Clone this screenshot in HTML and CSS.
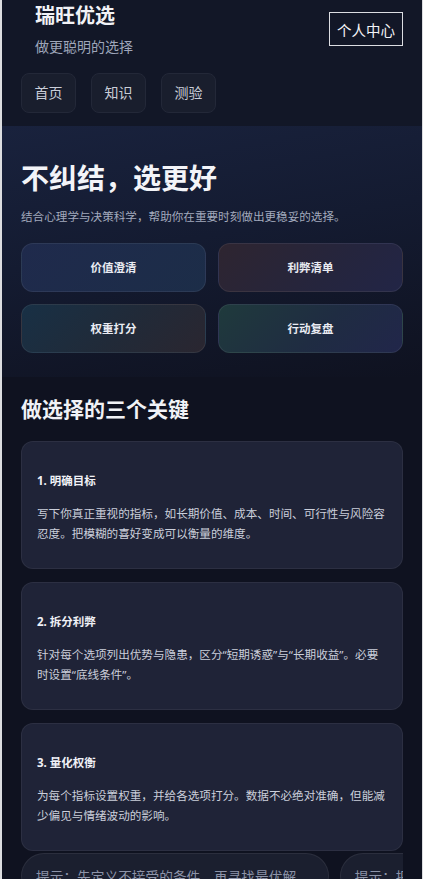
FILE: index.html
```html
<!DOCTYPE html>
<html lang="zh">

<head>
	<meta charset="utf-8">
	<title>瑞旺优选</title>
	<link rel="stylesheet" href="styles.css">
</head>

<body>
	<div class="app">
		<header class="header">
			<div class="header-top">
				<div class="brand">
					<div class="brand-name">瑞旺优选</div>
					<div class="brand-sub">做更聪明的选择</div>
				</div>
				<button class="btn-user">个人中心</button>
			</div>
			<nav class="nav">
				<a class="nav-item">首页</a>
				<a class="nav-item">知识</a>
				<a class="nav-item">测验</a>
			</nav>
		</header>

		<section class="hero">
			<h1 class="hero-title">不纠结，选更好</h1>
			<p class="hero-sub">结合心理学与决策科学，帮助你在重要时刻做出更稳妥的选择。</p>
			<div class="tools">
				<div class="tool tool-blue">价值澄清</div>
				<div class="tool tool-brown">利弊清单</div>
				<div class="tool tool-teal">权重打分</div>
				<div class="tool tool-green">行动复盘</div>
			</div>
		</section>

		<section class="keys">
			<h2 class="keys-title">做选择的三个关键</h2>
			<div class="card">
				<h3 class="card-title">1. 明确目标</h3>
				<p class="card-text">写下你真正重视的指标，如长期价值、成本、时间、可行性与风险容忍度。把模糊的喜好变成可以衡量的维度。</p>
			</div>
			<div class="card">
				<h3 class="card-title">2. 拆分利弊</h3>
				<p class="card-text">针对每个选项列出优势与隐患，区分“短期诱惑”与“长期收益”。必要时设置“底线条件”。</p>
			</div>
			<div class="card card-last">
				<h3 class="card-title">3. 量化权衡</h3>
				<p class="card-text">为每个指标设置权重，并给各选项打分。数据不必绝对准确，但能减少偏见与情绪波动的影响。</p>
			</div>
			<div class="tips">
				<div class="tip">提示：先定义不接受的条件，再寻找最优解。</div>
				<div class="tip">提示：把决定写下来，过一晚再确认。</div>
			</div>
		</section>
	</div>
</body>

</html>
```

FILE: styles.css
```css
* {
	box-sizing: border-box;
}

body {
	margin: 0;
	background-color: #dcdde0;
	font-family: "Noto Sans", "Noto Sans CJK SC", sans-serif;
	color: #eceef4;
}

.app {
	margin-left: 2px;
	width: 420px;
	min-height: 100vh;
	background-color: #0f1220;
	overflow: hidden;
}

/* header */
.header {
	background-color: #121727;
	padding: 0 19px 13px;
}

.header-top {
	display: flex;
	justify-content: space-between;
	align-items: flex-start;
}

.brand {
	padding-left: 14px;
}

.brand-name {
	margin-top: 2px;
	font-size: 20px;
	line-height: 28px;
	font-weight: bold;
	color: #f1f2f6;
}

.brand-sub {
	margin-top: 7px;
	font-size: 14px;
	line-height: 20px;
	color: #9ea6ba;
}

.btn-user {
	margin-top: 12px;
	height: 34px;
	width: 74px;
	padding: 0;
	background: transparent;
	border: 1.5px solid #dcdde2;
	color: #f2f3f6;
	font-family: inherit;
	font-size: 14.5px;
}

.nav {
	display: flex;
	gap: 15px;
	margin-top: 16px;
}

.nav-item {
	display: block;
	height: 40px;
	padding: 0 12.5px;
	line-height: 38px;
	font-size: 14px;
	color: #c9cdd8;
	background-color: #191e2d;
	border: 1px solid #232838;
	border-radius: 8px;
}

/* hero */
.hero {
	padding: 34px 19px 24px;
	background: linear-gradient(170deg, #19223d 0%, #141b31 45%, #0f1220 100%);
}

.hero-title {
	margin: 0;
	font-size: 28px;
	line-height: 36px;
	font-weight: bold;
	color: #f3f4f8;
}

.hero-sub {
	margin: 12px 0 0;
	font-size: 11.6px;
	line-height: 18px;
	color: #a3aabd;
}

.tools {
	display: grid;
	grid-template-columns: 1fr 1fr;
	gap: 12px;
	margin-top: 17px;
}

.tool {
	height: 49px;
	line-height: 47px;
	text-align: center;
	font-size: 11.5px;
	font-weight: bold;
	color: #e9ebf2;
	border: 1px solid rgba(255, 255, 255, 0.07);
	border-radius: 12px;
}

.tool-blue {
	background: linear-gradient(135deg, #1f2a4c 0%, #1c2d48 100%);
}

.tool-brown {
	background: linear-gradient(135deg, #2e2530 0%, #25253d 60%, #222546 100%);
}

.tool-teal {
	background: linear-gradient(135deg, #183045 0%, #212a38 55%, #2a2630 100%);
}

.tool-green {
	background: linear-gradient(135deg, #1f3a3c 0%, #1f2c42 55%, #21264a 100%);
}

/* keys */
.keys {
	padding: 18px 19px 0;
}

.keys-title {
	margin: 0 0 18px;
	font-size: 21px;
	line-height: 28px;
	font-weight: bold;
	color: #f1f2f6;
}

.card {
	height: 128px;
	margin-bottom: 13px;
	padding: 15px;
	background-color: #1f2337;
	border: 1px solid rgba(255, 255, 255, 0.06);
	border-radius: 12px;
}

.card-last {
	margin-bottom: 2px;
}

.card-title {
	margin: 15px 0 15px;
	font-size: 11.5px;
	line-height: 17px;
	font-weight: bold;
	color: #f0f1f6;
}

.card-text {
	margin: 0;
	font-size: 11.6px;
	line-height: 20px;
	color: #cbcfdb;
}

.tips {
	display: flex;
	gap: 11px;
	overflow: hidden;
}

.tip {
	flex: none;
	height: 46px;
	padding: 0 18px 0 14px;
	line-height: 46px;
	font-size: 13.7px;
	color: #8d94a9;
	white-space: nowrap;
	background-color: #1b1f2f;
	border: 1px solid rgba(255, 255, 255, 0.07);
	border-radius: 23px;
}
```
